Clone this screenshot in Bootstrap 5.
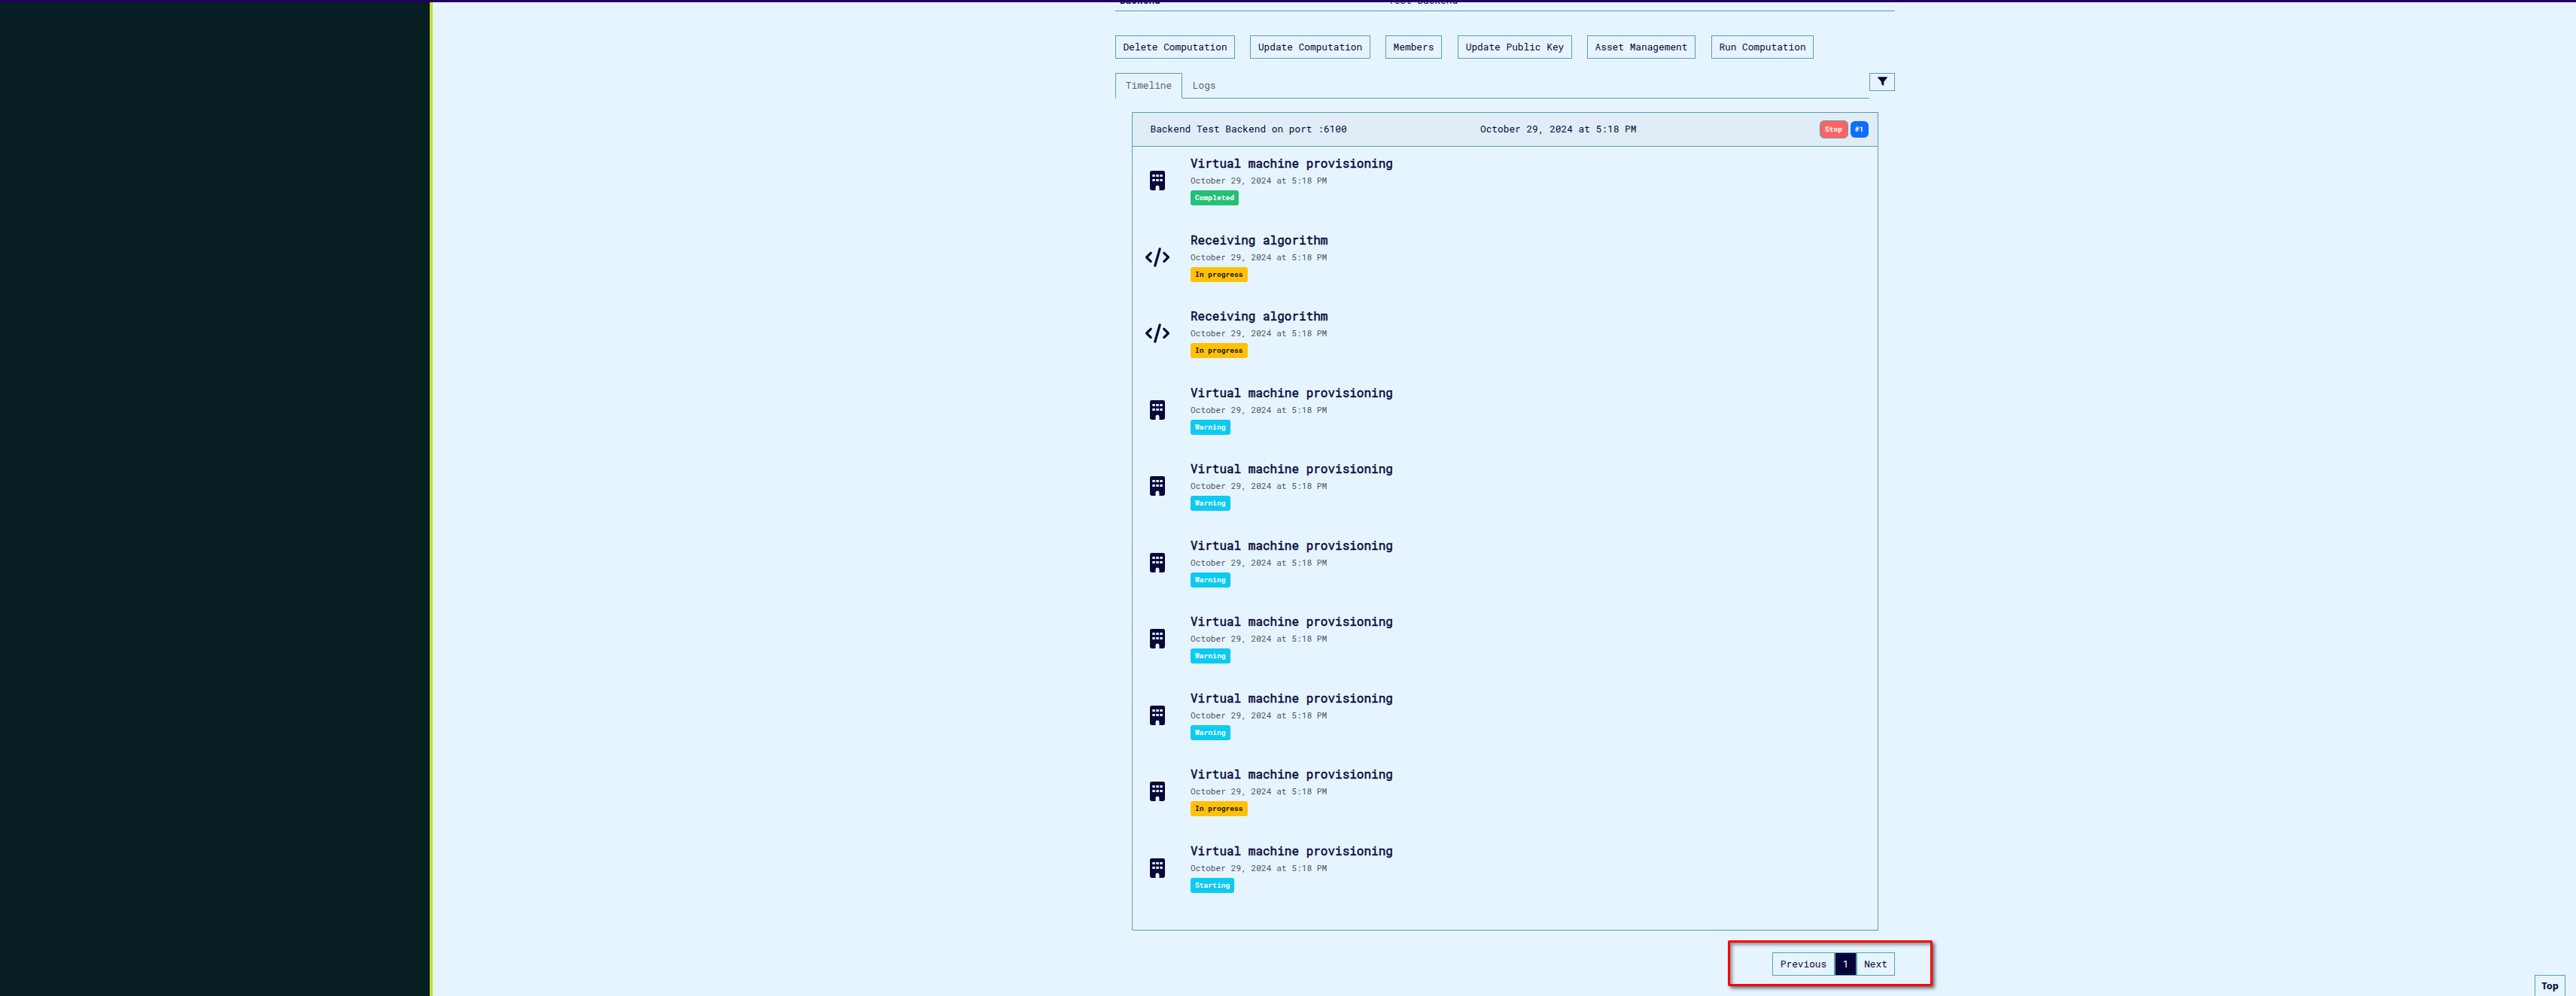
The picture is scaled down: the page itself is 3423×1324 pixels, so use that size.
<!DOCTYPE html>
<html lang="en">
<head>
<meta charset="utf-8">
<title>Computation</title>
<link href="https://cdn.jsdelivr.net/npm/bootstrap@5.3.0/dist/css/bootstrap.min.css" rel="stylesheet">
<style>
:root{--line:#52a3ae;--ink:#08083a}
body{font-family:"Roboto Mono","Liberation Mono",monospace;font-size:12.8px;line-height:19.2px;color:var(--ink);background:#e6f4ff;height:1324px;overflow:hidden}
.topbar{height:3px;background:#23005f}
.shell{height:1321px}
.side{width:575px;flex:none;background:#071e22;border-right:4px solid #c9dc3a}
.content-area{width:1036px;margin-left:907px;flex:none}
.info-row{height:12px;border-bottom:1px solid var(--line);overflow:hidden}
.info-row span{display:block;margin-top:-12px}
.info-key{width:363px;padding-left:6px}
.actions{margin-top:32px;gap:20px}
.btn-line{border:1px solid var(--line);border-radius:0;color:var(--ink);font-size:12.8px;line-height:19.2px;padding:5px 0 4.8px;height:31px;background:transparent}
.tabs-row{margin-top:19px;height:34px}
.nav-tabs{--bs-nav-tabs-border-color:var(--line);border-bottom:1px solid var(--line);height:34px}
.nav-tabs .nav-link{border-radius:0;color:#5b6470;padding:6px 12.800px 6px}
.nav-tabs .nav-link.active{color:#5b6470;background:#e6f4ff;border-color:var(--line) var(--line) #e6f4ff;height:34px}
.filter-btn{width:34px;height:24px;border:1px solid var(--line);padding:0 0 2px}
.log-panel{margin:18px 22px 0 22px;border:1px solid var(--line);height:1088px}
.log-head{height:45px;border-bottom:1px solid var(--line);background:#e0edf6;padding:0 12.500px 0 23.500px}
.head-name{width:438.5px}
.mini{font-size:9.6px;font-weight:700;border-radius:6px;line-height:22px;height:22px;text-align:center;color:#fff}
.stop{width:38px;height:24px;background:#ff6464;border:1px solid var(--line);margin-right:3px}
.num{width:24px;background:#0d6efd}
.event{height:101.55px;padding-top:12px}
.event-icon{width:68px;padding-top:20px;margin-right:9px;height:70px;text-align:center;padding-right:2px}
.event-title{font-size:16px;line-height:20px;font-weight:400;-webkit-text-stroke:.5px var(--ink);margin:0}
.event-date{font-size:11.2px;line-height:17px;color:#4c5560;margin-top:4px}
.event .badge{display:block;width:max-content;font-size:9.6px;line-height:10px;padding:5px 6.1px;height:20px;border-radius:3px;margin-top:5px}
.b-done{background:#26bf78}.b-info{background:#0dcaf0}.event .b-prog{background:#ffc107;color:#111}
.pager{margin-top:29px}
.pager .page-link{font-size:12.8px;line-height:19px;height:31px;padding:5px 0;text-align:center;border:1px solid var(--line);border-radius:0!important;color:var(--ink);background:transparent;margin:0!important}
.pager .active .page-link{background:#04043a;color:#fff;border-width:1px}
.w-prev{width:83px}.w-num{width:29px}.w-next{width:51px}
.callout{position:absolute;left:2296px;top:1250px;width:272px;height:61px;border:3px solid red;border-radius:2px;box-shadow:3px 3px 4px #0008,inset 3px 3px 4px #0006}
.top-btn{position:absolute;left:3368px;top:1296px;width:41px;height:34px;border:1px solid var(--line);font:700 12.8px/27px "Noto Sans",sans-serif;text-align:center;color:var(--ink)}
</style>
<script src="https://cdn.jsdelivr.net/npm/bootstrap@5.3.0/dist/js/bootstrap.bundle.min.js"></script>
</head>
<body class="position-relative">
<svg width="0" height="0" class="position-absolute">
<symbol id="bld" viewBox="0 0 20 26"><path fill="#08083a" fill-rule="evenodd" d="M2.4 0h15.2Q20 0 20 2.4v21.2Q20 26 17.6 26H12.500v-4q0-2.400-2.500-2.400T7.500 22v4H2.400Q0 26 0 23.600V2.400Q0 0 2.400 0zM3.300 4.900v3h3.500v-3zm5 0v3h3.500v-3zm5 0v3h3.500v-3zM3.300 11v3h3.500v-3zm5 0v3h3.500v-3zm5 0v3h3.500v-3z"/></symbol>
<symbol id="code" viewBox="0 0 640 512"><path fill="#08083a" d="M392.800 1.200c-17-4.900-34.700 5-39.600 22l-128 448c-4.900 17 5 34.700 22 39.600s34.700-5 39.600-22l128-448c4.900-17-5-34.700-22-39.600zm80.600 120.100c-12.500 12.500-12.500 32.800 0 45.300l89.300 89.400-89.400 89.400c-12.500 12.500-12.500 32.800 0 45.300s32.800 12.500 45.300 0l112-112c12.500-12.500 12.500-32.800 0-45.300l-112-112c-12.500-12.500-32.800-12.500-45.300 0zm-306.700 0c-12.500-12.500-32.800-12.500-45.300 0l-112 112c-12.500 12.500-12.500 32.800 0 45.300l112 112c12.500 12.500 32.800 12.500 45.300 0s12.500-32.800 0-45.300L77.300 256l89.400-89.400c12.500-12.500 12.500-32.800 0-45.300z"/></symbol>
</svg>
<div class="topbar"></div>
<div class="shell d-flex">
<aside class="side"></aside>
<main class="content-area">
<div class="info-row d-flex"><span class="info-key fw-bold">Backend</span><span>Test Backend</span></div>
<div class="actions d-flex">
<button class="btn btn-line" style="width:159px">Delete Computation</button>
<button class="btn btn-line" style="width:160px">Update Computation</button>
<button class="btn btn-line" style="width:75px">Members</button>
<button class="btn btn-line" style="width:152px;margin-left:1px">Update Public Key</button>
<button class="btn btn-line" style="width:144px">Asset Management</button>
<button class="btn btn-line" style="width:136px;margin-left:1px">Run Computation</button>
</div>
<div class="tabs-row d-flex align-items-start">
<ul class="nav nav-tabs flex-grow-1"><li class="nav-item"><a class="nav-link active">Timeline</a></li><li class="nav-item"><a class="nav-link">Logs</a></li></ul>
<div class="filter-btn d-flex align-items-center justify-content-center"><svg width="13" height="12" viewBox="0 0 13 12"><path fill="#08083a" d="M.5.300h12q.600.400.200 1L8.300 6.700v4.500q-.300.800-1 .400L5 9.700v-3L.300 1.300Q-.100.600.500.300z"/></svg></div>
</div>
<section class="log-panel">
<header class="log-head d-flex align-items-center"><span class="head-name">Backend Test Backend on port :6100</span><span>October 29, 2024 at 5:18 PM</span><span class="mini stop ms-auto">Stop</span><span class="mini num">#1</span></header>
<div id="events"></div>
</section>
<ul class="pager pagination justify-content-end mb-0"><li class="page-item"><a class="page-link w-prev">Previous</a></li><li class="page-item active"><a class="page-link w-num">1</a></li><li class="page-item"><a class="page-link w-next">Next</a></li></ul>
</main>
</div>
<div class="callout"></div>
<div class="top-btn">Top</div>
<script>
const vm='Virtual machine provisioning',ra='Receiving algorithm';
const rows=[[vm,'Completed','b-done'],[ra,'In progress','b-prog'],[ra,'In progress','b-prog'],...Array(5).fill([vm,'Warning','b-info']),[vm,'In progress','b-prog'],[vm,'Starting','b-info']];
document.getElementById('events').innerHTML=rows.map(([t,s,c])=>`<div class="event d-flex"><div class="event-icon"><svg width="${t===vm?20:32}" height="26"><use href="#${t===vm?'bld':'code'}"/></svg></div><div><h6 class="event-title">${t}</h6><div class="event-date">October 29, 2024 at 5:18 PM</div><span class="badge ${c}">${s}</span></div></div>`).join('');
</script>
</body>
</html>
